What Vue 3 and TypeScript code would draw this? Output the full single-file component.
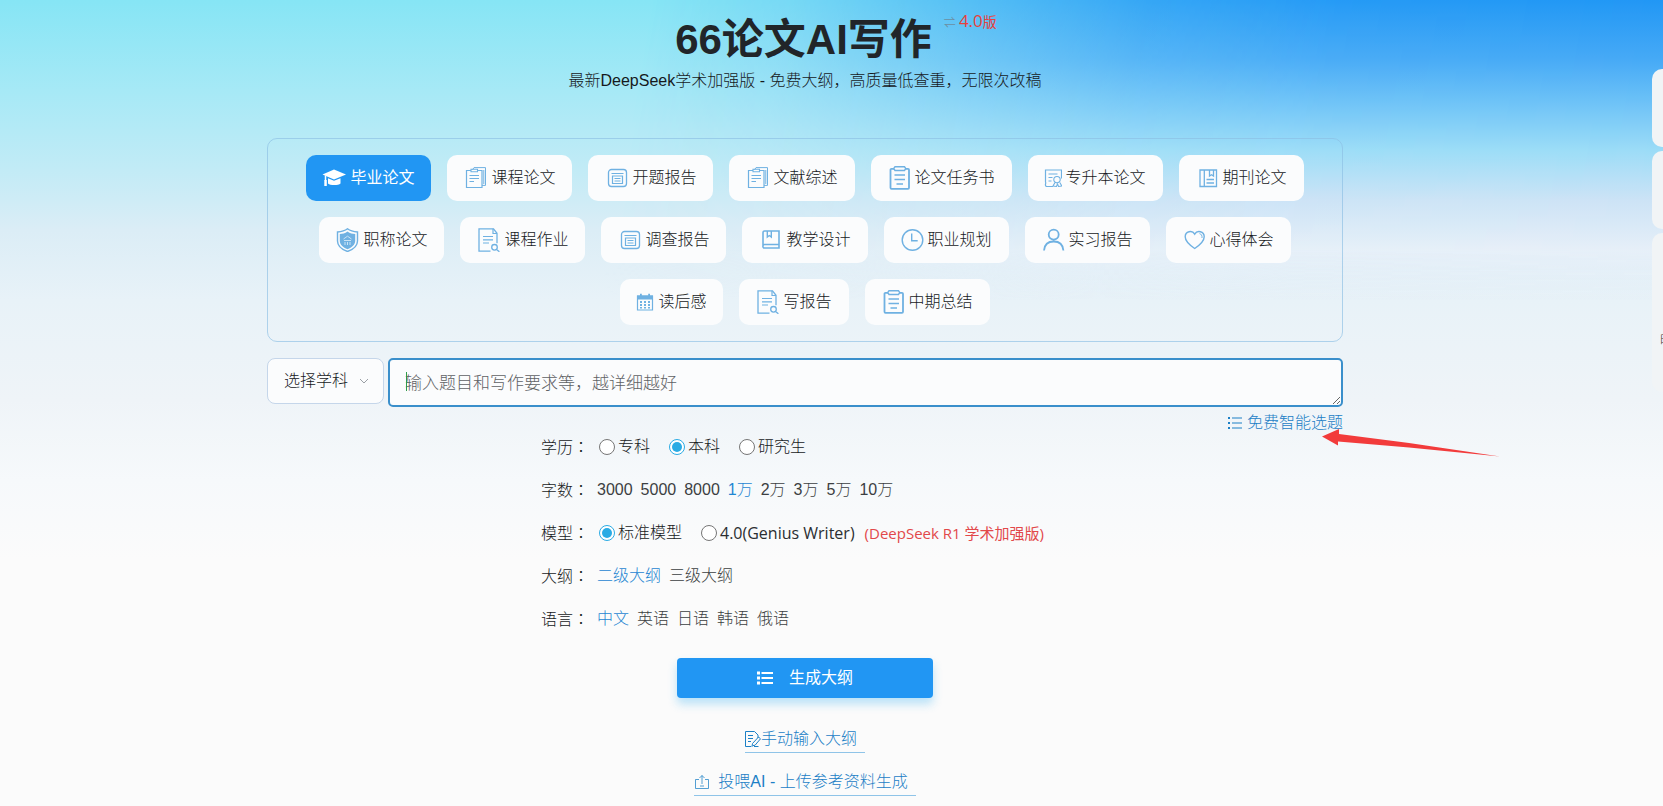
<script setup lang="ts">
import { ref } from 'vue'

interface Shape {
  d: string
  solid?: boolean
  width?: number
}

interface Category {
  label: string
  icon: string
}

const icons: Record<string, Shape[]> = {
  cap: [
    { d: 'M0.5 8.500L12 3.500l12 5L12 13.500z', solid: true },
    { d: 'M6 12.300l6 2.500 6.500-2.600v5.300c-2 2-10.500 2-12.500 0z', solid: true },
    { d: 'M3.500 9.500v5', width: 1.5 },
    { d: 'M2.300 14h2.500v6h-2.500z', solid: true },
  ],
  docs: [
    { d: 'M9.500 3.800l1.500-2.200h11.500v17.800h-3.500' },
    { d: 'M8 4.500H3.500v17h15.500v-17h-4.500', width: 1.2 },
    { d: 'M8 3.200h6.500v2.600h-6.500zM6.500 9.500h9.500M6.500 12.500h9.500M6.500 15.500h4.500', width: 1.1 },
    { d: 'M20.800 4v14' },
  ],
  form: [
    { d: 'M7.500 3.500h12a3 3 0 0 1 3 3v11a3 3 0 0 1-3 3h-12a3 3 0 0 1-3-3v-11a3 3 0 0 1 3-3z', width: 1.3 },
    { d: 'M7.500 7.500h12M8.500 10h10v7.500h-10zM10.500 12.500h6M10.500 15h6', width: 1.2 },
  ],
  clipboard: [
    { d: 'M7 2.800H4.500a1 1 0 0 0-1 1v18a1 1 0 0 0 1 1h16.500a1 1 0 0 0 1-1v-18a1 1 0 0 0-1-1h-2.500', width: 1.8 },
    { d: 'M8 .8h9.500l1.300 1.700-1.300 2h-9.500l-1.300-2z', width: 1.4 },
    { d: 'M7.500 9h10.500M7.500 13.500h10.500M9.500 18h6.500', width: 1.6 },
  ],
  certificate: [
    { d: 'M9 17.500H2.500c-2.500-1 0-3-1-4.500V1h16v8.500', width: 1.2 },
    { d: 'M4.500 5h9M4.500 8.500h4M4.500 12h3' },
    { d: 'M13 7.500a3.200 3.200 0 1 1 0 6.400a3.200 3.200 0 1 1 0-6.400zM11 13.500l-2 3.500 2 .2 1 1.300 1.500-3.500 1.500 3.500 1-1.300 1.800-.2-2-3.500', width: 1.1 },
  ],
  journal: [
    { d: 'M5 4h16.500v16.500h-16.500zM9.300 4v16.500M14.500 4v6l2-1.300 2 1.300v-6M11.500 13.500h7.500M11.500 17h7.500', width: 1.3 },
  ],
  shield: [
    { d: 'M12.500 .8c3 2.400 6.500 3 10 3.200v9c0 5-4.500 8.500-10 10.500-5.500-2-10-5.500-10-10.500v-9c3.500-.2 7-.8 10-3.200z', width: 1.4 },
    { d: 'M12.500 3.500c2.500 1.800 5 2.400 7.700 2.600v7c0 3.600-3.200 6.400-7.700 8.200-4.500-1.800-7.700-4.600-7.700-8.200v-7c2.700-.2 5.200-.8 7.700-2.600z', solid: true },
  ],
  search: [
    { d: 'M14.500 23.200H3V.8h14.500l3.500 4.500v10', width: 1.3 },
    { d: 'M17 .8v4.700h4M7 8.500h10M7 11.800h10M7 15h6', width: 1.2 },
    { d: 'M18.500 16.500a2.800 2.800 0 1 1 0 5.600a2.800 2.800 0 1 1 0-5.600zM20.600 21.500l2.800 2.300', width: 1.3 },
  ],
  book: [
    { d: 'M6.500 3h14.500v17h-14.500c-2.200 0-2.200-3.500 0-3.500h14.500M5 18V4.500c0-1 .6-1.500 1.500-1.500', width: 1.6 },
    { d: 'M9.300 3v6l2-1.500 2 1.500v-6', width: 1.4 },
  ],
  clock: [
    { d: 'M12.500 1.700a10.300 10.300 0 1 1 0 20.600a10.300 10.300 0 1 1 0-20.600zM11.700 5.500v7.300h6', width: 1.4 },
  ],
  person: [
    { d: 'M12.700 1.600a5 5 0 1 1 0 10a5 5 0 1 1 0-10zM3 22.500c.5-6 4-9 9.700-9s9.200 3 9.700 9', width: 1.8 },
  ],
  heart: [
    { d: 'M12.700 20.500c-4.500-3-9.500-7-9.500-11.700 0-5.600 7-7 9.500-2.600 2.500-4.400 9.500-3 9.500 2.600 0 4.700-5 8.700-9.500 11.700z', width: 1.4 },
    { d: 'M17.500 5.600c1.800.4 2.800 2 2.500 4.400' },
  ],
  calendar: [
    { d: 'M1 2.500h16v4h-16zM4 .8h1.800v3h-1.800zM12.200 .8h1.800v3h-1.800z', solid: true },
    { d: 'M1.500 3h15v14h-15z', width: 1.2 },
    { d: 'M4 8h2v2h-2zM8 8h2v2h-2zM12 8h2v2h-2zM4 11h2v2h-2zM8 11h2v2h-2zM12 11h2v2h-2zM4 14h2v1.500h-2zM8 14h2v1.500h-2zM12 14h2v1.500h-2z', solid: true },
  ],
}

const narrow = ['certificate', 'calendar']
const iconSize = (name: string): number => (narrow.includes(name) ? 18 : 24)

const categories: Category[] = [
  { label: '毕业论文', icon: 'cap' },
  { label: '课程论文', icon: 'docs' },
  { label: '开题报告', icon: 'form' },
  { label: '文献综述', icon: 'docs' },
  { label: '论文任务书', icon: 'clipboard' },
  { label: '专升本论文', icon: 'certificate' },
  { label: '期刊论文', icon: 'journal' },
  { label: '职称论文', icon: 'shield' },
  { label: '课程作业', icon: 'search' },
  { label: '调查报告', icon: 'form' },
  { label: '教学设计', icon: 'book' },
  { label: '职业规划', icon: 'clock' },
  { label: '实习报告', icon: 'person' },
  { label: '心得体会', icon: 'heart' },
  { label: '读后感', icon: 'calendar' },
  { label: '写报告', icon: 'search' },
  { label: '中期总结', icon: 'clipboard' },
]

const active = ref('毕业论文')
const subject = ref('')
const topic = ref('')
const degree = ref('本科')
const model = ref('standard')
const words = ref('1万')
const outline = ref('二级大纲')
const language = ref('中文')

const degrees = ['专科', '本科', '研究生']
const wordCounts = ['3000', '5000', '8000', '1万', '2万', '3万', '5万', '10万']
const outlines = ['二级大纲', '三级大纲']
const languages = ['中文', '英语', '日语', '韩语', '俄语']
</script>

<template>
  <div class="page">
    <div class="sky"></div>
    <main class="content">
      <header class="head">
        <h1 class="title">
          66论文AI写作
          <a class="version" href="#"><span class="swap">⇌</span><span class="num">4.0</span>版</a>
        </h1>
        <p class="subtitle">最新DeepSeek学术加强版 - 免费大纲，高质量低查重，无限次改稿</p>
      </header>

      <nav class="panel">
        <button
          v-for="c in categories"
          :key="c.label"
          type="button"
          class="chip"
          :class="{ active: active === c.label }"
          @click="active = c.label"
        >
          <svg
            class="icon"
            :width="iconSize(c.icon)"
            :height="iconSize(c.icon)"
            :viewBox="`0 0 ${iconSize(c.icon)} ${iconSize(c.icon)}`"
            aria-hidden="true"
          >
            <path
              v-for="(s, i) in icons[c.icon]"
              :key="i"
              :d="s.d"
              :class="s.solid ? 'solid' : 'line'"
              :stroke-width="s.width ?? 1"
            />
            <path v-if="c.icon === 'shield'" class="knock" d="M8.500 11l4-2.800 4 2.800M9 12.500h7M10 14v3M12.500 14v3M15 14v3" />
          </svg>
          <span>{{ c.label }}</span>
        </button>
      </nav>

      <form class="form" @submit.prevent>
        <div class="entry">
          <div class="subject">
            <select v-model="subject" aria-label="选择学科">
              <option value="">选择学科</option>
            </select>
            <svg class="chevron" width="10" height="6" viewBox="0 0 10 6" aria-hidden="true"><path d="M1 1l4 4 4-4" /></svg>
          </div>
          <div class="topic">
            <textarea v-model="topic" rows="1" placeholder="输入题目和写作要求等，越详细越好" aria-label="题目"></textarea>
            <span class="caret"></span>
          </div>
        </div>

        <div class="pick">
          <a href="#">
            <svg width="16" height="14" viewBox="0 0 16 14" aria-hidden="true">
              <path class="solid" d="M1 1h2v2h-2zM1 6h2v2h-2zM1 11h2v2h-2z" />
              <path class="line" stroke-width="1.2" d="M5 2h10M5 7h10M5 12h10" />
            </svg>
            <span>免费智能选题</span>
          </a>
          <svg class="arrow" width="179" height="30" viewBox="0 0 179 30" aria-hidden="true">
            <path d="M0 8.500L17 1v5l70 9 91 13.500-91-9-71-6v4z" />
          </svg>
        </div>

        <div class="options">
          <div class="row" role="group" aria-label="学历">
            <span class="label">学历<span class="colon">：</span></span>
            <div class="radios">
              <label v-for="d in degrees" :key="d"><input v-model="degree" type="radio" name="degree" :value="d" />{{ d }}</label>
            </div>
          </div>
          <div class="row" role="group" aria-label="字数">
            <span class="label">字数<span class="colon">：</span></span>
            <div class="choices">
              <button v-for="w in wordCounts" :key="w" type="button" :class="{ on: words === w }" @click="words = w">{{ w }}</button>
            </div>
          </div>
          <div class="row" role="group" aria-label="模型">
            <span class="label">模型<span class="colon">：</span></span>
            <div class="radios">
              <label><input v-model="model" type="radio" name="model" value="standard" />标准模型</label>
              <label class="genius"><input v-model="model" type="radio" name="model" value="genius" />4.0(Genius Writer)<em>(DeepSeek R1 学术加强版)</em></label>
            </div>
          </div>
          <div class="row" role="group" aria-label="大纲">
            <span class="label">大纲<span class="colon">：</span></span>
            <div class="choices">
              <button v-for="o in outlines" :key="o" type="button" :class="{ on: outline === o }" @click="outline = o">{{ o }}</button>
            </div>
          </div>
          <div class="row" role="group" aria-label="语言">
            <span class="label">语言<span class="colon">：</span></span>
            <div class="choices">
              <button v-for="l in languages" :key="l" type="button" :class="{ on: language === l }" @click="language = l">{{ l }}</button>
            </div>
          </div>
        </div>

        <div class="actions">
          <button type="submit" class="submit">
            <svg width="16" height="14" viewBox="0 0 16 14" aria-hidden="true">
              <path class="solid" d="M0 .5h3v3h-3zM0 5.500h3v3h-3zM0 10.500h3v3h-3z" />
              <path class="line" stroke-width="2" d="M4.500 2h11.500M4.500 7h11.500M4.500 12h11.500" />
            </svg>
            <span>生成大纲</span>
          </button>
          <a href="#" class="under">
            <svg width="16" height="16" viewBox="0 0 16 16" aria-hidden="true">
              <path class="line" d="M13 7V4L9.500 .5H.5v15h5.500M3 4.500h5M3 7.500h5M3 10.500h3M8 14.500l-1 1 .5-3 6-6.500 2 1.800-5.500 6.500zM9 15.500h4.500" />
            </svg>
            <span>手动输入大纲</span>
          </a>
          <a href="#" class="under wide">
            <svg width="16" height="16" viewBox="0 0 16 16" aria-hidden="true">
              <path class="line thin" d="M5 5.500H1.500v9h13v-9h-3.500M8 10V1.500M5.500 4l2.500-2.500 2.500 2.500M6 12h4" />
            </svg>
            <span>投喂AI - 上传参考资料生成</span>
          </a>
        </div>
      </form>
    </main>

    <aside class="rail">
      <div class="tab"></div>
      <div class="tab"></div>
      <div class="tab tall"><span>时</span></div>
    </aside>
  </div>
</template>

<style>
body {
  margin: 0;
  background: #fbfcfc;
}
</style>

<style scoped>
.page {
  position: relative;
  min-height: 100vh;
  box-sizing: border-box;
  padding: 0 53px 8px 0;
  overflow: hidden;
  color: #16191c;
  font: 300 16px/24px "Liberation Sans", "Noto Sans CJK SC", sans-serif;
  background: linear-gradient(#86e5f5 0, #a6e9f6 90px, #c2ebf6 170px, #dbedf6 230px, #e8f2f8 300px, #eff4f8 400px, #f6f9fb 480px, #fbfbfb 560px);
}
.sky {
  position: absolute;
  inset: 0 0 auto 0;
  height: 300px;
  background: linear-gradient(#2096f5 0, #46a9f6 60px, #6fc3f7 105px, #9bdcf7 150px, #cce3f6 200px, #e6eff8 250px, rgba(233, 243, 248, 0) 300px);
  mask-image: linear-gradient(100deg, transparent 38%, rgba(0, 0, 0, 0.15) 46%, rgba(0, 0, 0, 0.5) 57%, rgba(0, 0, 0, 0.8) 67%, rgba(0, 0, 0, 0.95) 78%, #000 100%);
}
.content {
  position: relative;
  max-width: 1076px;
  margin: 0 auto;
}
.head {
  height: 138px;
  text-align: center;
}
.title {
  position: relative;
  width: max-content;
  margin: 0 auto;
  padding: 15px 3px 0 0;
  font-size: 42px;
  line-height: 50px;
  font-weight: 700;
  color: #212529;
}
.version {
  position: absolute;
  left: 100%;
  top: 9px;
  display: flex;
  align-items: baseline;
  margin-left: 9px;
  color: #e8413c;
  font-size: 14px;
  line-height: 24px;
  font-weight: 400;
  text-decoration: none;
  white-space: nowrap;
}
.version .swap {
  margin-right: 3px;
  color: #6c8fa3;
  font-size: 12px;
}
.version .num {
  font-family: "Open Sans", "Noto Sans", sans-serif;
  font-size: 17px;
}
.subtitle {
  margin: 4px 0 0;
}
.panel {
  display: flex;
  flex-wrap: wrap;
  justify-content: center;
  gap: 16px;
  padding: 16px;
  border: 1px solid rgba(140, 190, 228, 0.65);
  border-radius: 10px;
}
button {
  font: inherit;
  color: inherit;
  border: 0;
  cursor: pointer;
}
.chip {
  display: flex;
  align-items: center;
  gap: 4px;
  height: 46px;
  padding: 0 17px 0 16px;
  border-radius: 10px;
  background: #fbfcfd;
  white-space: nowrap;
}
.icon {
  flex: none;
  color: #6fb1e2;
}
.chip.active {
  background: #2196f3;
  color: #fff;
  font-weight: 400;
}
.chip.active .icon {
  color: #fff;
}
.solid {
  fill: currentColor;
}
.line {
  fill: none;
  stroke: currentColor;
}
.thin {
  opacity: 0.75;
}
.knock {
  fill: none;
  stroke: #c9e3f6;
}
.entry {
  display: flex;
  align-items: flex-start;
  gap: 4px;
  margin-top: 16px;
}
.subject {
  position: relative;
  flex: none;
  width: 117px;
}
.subject select {
  appearance: none;
  display: block;
  width: 100%;
  height: 46px;
  padding: 0 16px;
  border: 1px solid #c5d6ea;
  border-radius: 8px;
  background: #fbfcfd;
  color: inherit;
  font: inherit;
}
.chevron {
  position: absolute;
  right: 15px;
  top: 20px;
  fill: none;
  stroke: #9a9fa5;
  pointer-events: none;
}
.topic {
  position: relative;
  flex: 1;
}
textarea {
  display: block;
  width: 100%;
  height: 49px;
  min-height: 49px;
  box-sizing: border-box;
  padding: 12px 15px 10px;
  border: 2px solid #3a8fcb;
  border-radius: 5px;
  outline: none;
  background: #fbfcfd;
  color: inherit;
  font: inherit;
  font-size: 17px;
  line-height: 23px;
  overflow: hidden;
}
textarea::placeholder {
  color: #5f6265;
}
.caret {
  position: absolute;
  left: 18px;
  top: 14px;
  width: 1px;
  height: 19px;
  background: #2e9b4e;
}
.pick {
  position: relative;
  display: flex;
  justify-content: flex-end;
  padding-top: 4px;
}
.pick a {
  display: flex;
  align-items: center;
  gap: 4px;
  color: #1c80c6;
  text-decoration: none;
}
.arrow {
  position: absolute;
  left: 100%;
  top: 21px;
  margin-left: -21px;
  fill: #f23b3b;
}
.options {
  display: grid;
  gap: 19px;
  width: 528px;
  margin: 0 auto;
}
.row {
  display: flex;
  align-items: center;
  height: 24px;
  white-space: nowrap;
}
.label {
  flex: none;
  width: 56px;
}
.colon {
  font-family: "Noto Sans CJK JP", sans-serif;
}
.radios {
  display: flex;
  gap: 17px;
}
.radios label {
  display: flex;
  align-items: center;
}
.radios input {
  appearance: none;
  display: grid;
  place-items: center;
  width: 16px;
  height: 16px;
  margin: 0 3px 0 2px;
  border: 1px solid #767676;
  border-radius: 50%;
  background: #fff;
}
.radios input:checked {
  border-color: #2aabe4;
}
.radios input:checked::before {
  content: "";
  width: 10px;
  height: 10px;
  border-radius: 50%;
  background: #2aabe4;
}
.genius {
  color: #2b2e31;
  font-family: "Open Sans", "Noto Sans CJK SC", sans-serif;
  font-weight: 400;
}
.genius em {
  margin-left: 10px;
  color: #e2484a;
  font-size: 15px;
  font-style: normal;
}
.choices {
  display: flex;
  gap: 8px;
  color: #3c3f42;
}
.choices button {
  padding: 0;
  background: none;
}
.choices .on {
  color: #1f86d2;
}
.actions {
  display: flex;
  flex-direction: column;
  align-items: center;
  margin-top: 27px;
}
.submit {
  display: flex;
  align-items: center;
  justify-content: center;
  gap: 16px;
  width: 256px;
  height: 40px;
  border-radius: 4px;
  background: #2196f3;
  color: #fff;
  font-weight: 400;
  box-shadow: 0 6px 10px rgba(33, 170, 243, 0.3);
}
.under {
  display: flex;
  align-items: center;
  box-sizing: border-box;
  height: 28px;
  margin-top: 27px;
  padding: 0 8px 0 0;
  border-bottom: 1px solid #8fc4e8;
  color: #1c80c6;
  text-decoration: none;
}
.wide {
  gap: 8px;
  margin-top: 15px;
}
.rail {
  position: absolute;
  right: 0;
  top: 69px;
  display: grid;
  gap: 4px;
  width: 11px;
}
.tab {
  height: 78px;
  overflow: hidden;
  border-radius: 10px 0 0 10px;
  background: #f1f4f6;
}
.tall {
  box-sizing: border-box;
  height: 159px;
  padding: 95px 0 0 8px;
  color: #333;
  font-size: 13px;
  white-space: nowrap;
}
</style>
